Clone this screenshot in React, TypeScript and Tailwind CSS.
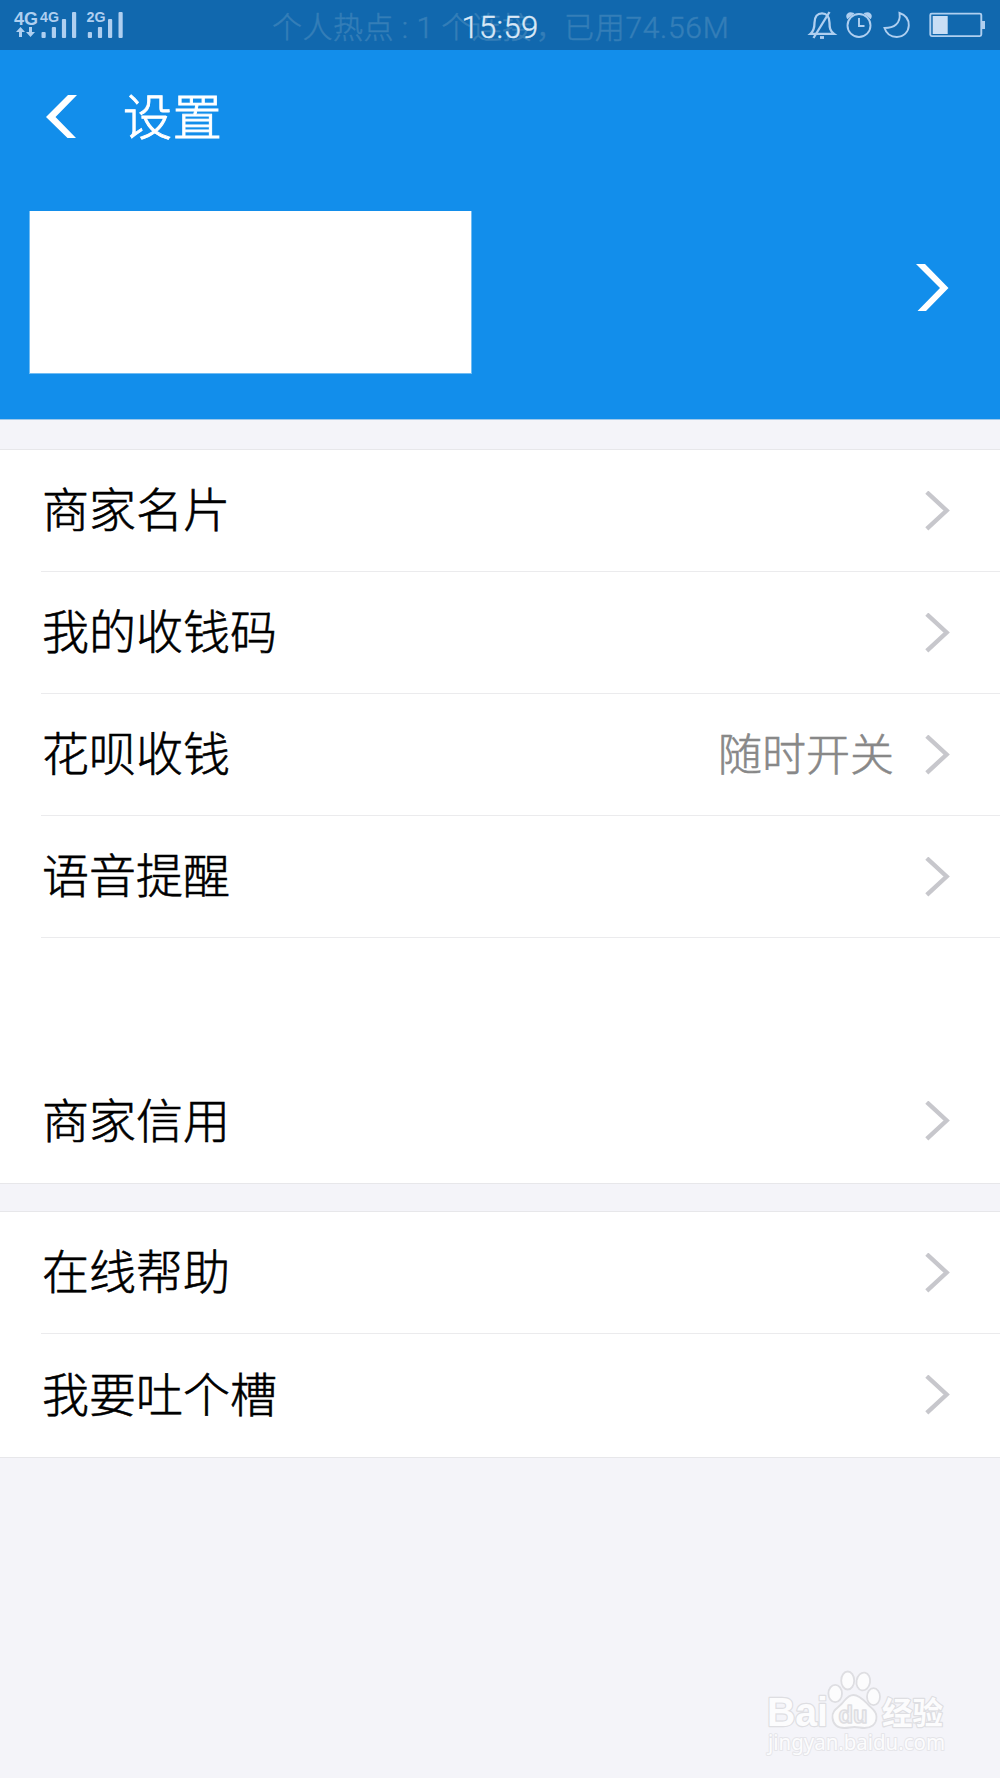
import React from 'react';

type Item = { label: string; value?: string };

function Chevron() {
  return (
    <svg className="mr-[50px] h-10 w-[25px] shrink-0" viewBox="0 0 25 40" fill="none">
      <path d="M1.800 1.200 21.600 19.500 1.800 37.800" stroke="#c7c7cc" strokeWidth="4.4" />
    </svg>
  );
}

function Row({ item, line }: { item: Item; line: boolean }) {
  return (
    <div className="ml-[41px] flex h-[122px] shrink-0">
      <div className={line ? 'flex grow items-center border-b-[1.5px] border-[#ebebed] pl-px' : 'flex grow items-center pl-px'}>
        <span className="-mt-[7px] grow text-[47px] leading-[60px] text-black [-webkit-text-stroke:0.6px_black]">{item.label}</span>
        {item.value && (
          <span className="-mt-[5px] mr-[31px] text-[44px] leading-[60px] text-[#888] [-webkit-text-stroke:0.6px_#888]">{item.value}</span>
        )}
        <Chevron />
      </div>
    </div>
  );
}

function SignalIcons() {
  return (
    <svg className="h-[50px] w-[130px]" viewBox="0 0 130 50" fill="#afcff0" fontFamily="Liberation Sans, sans-serif" fontWeight="700">
      <text x="14" y="25" fontSize="18" textLength="24" lengthAdjust="spacingAndGlyphs">4G</text>
      <path d="m20.500 27 4.500 5h-3v5h-3v-5h-3zM30.500 37l-4.500-5h3v-5h3v5h3z" />
      <text x="40" y="22" fontSize="14.500" textLength="19" lengthAdjust="spacingAndGlyphs">4G</text>
      <text x="86.500" y="22" fontSize="14.500" textLength="19" lengthAdjust="spacingAndGlyphs">2G</text>
      <g>
        <rect x="41.500" y="32" width="4.200" height="6" rx="1" />
        <rect x="51.800" y="27" width="4.200" height="11" rx="1" />
        <rect x="61.900" y="19" width="4.200" height="19" rx="1" />
        <rect x="72" y="12" width="4.200" height="26" rx="1" />
        <rect x="87.800" y="32" width="4.200" height="6" rx="1" />
        <rect x="97.900" y="27" width="4.200" height="11" rx="1" />
        <rect x="108" y="19" width="4.200" height="19" rx="1" />
        <rect x="118.500" y="12" width="4.200" height="26" rx="1" />
      </g>
    </svg>
  );
}

function SystemIcons() {
  return (
    <svg className="h-[50px] w-[200px]" viewBox="800 0 200 50" fill="none" stroke="#afcff0" strokeWidth="1.9">
      <path d="M810.500 33.800h23.500c-4-3-4.500-6-4.500-11 0-6-3-9.500-7.500-9.500s-7.500 3.500-7.500 9.500c0 5-.5 8-4 11z" strokeWidth="2.300" />
      <path d="m813.500 38 16-26" strokeWidth="2.300" />
      <path d="M820 37.500h4" strokeWidth="2.800" />
      <circle cx="859" cy="25.500" r="11.500" />
      <path d="M859 18v8h5.500" />
      <path d="M847.500 18c-1.500-3 1-6 5.500-4.500zM870.500 18c1.500-3-1-6-5.500-4.500z" fill="#afcff0" stroke="#afcff0" strokeWidth="1.500" />
      <path d="M899.500 13c6 2 9.500 6.500 9.300 12.500-.3 6.500-5 11.500-12 11.500-6 0-10.500-3.500-12.300-9 9.500 0 16.500-4.500 15-15z" />
      <rect x="930.300" y="13.600" width="51" height="22.500" rx="1.500" strokeWidth="1.900" />
      <rect x="932.700" y="16" width="15" height="18" fill="#c9def5" stroke="none" />
      <path d="M983.500 21v8" strokeWidth="3" />
    </svg>
  );
}

function Watermark() {
  return (
    <svg className="absolute right-[50px] bottom-[18px] h-[90px] w-[190px] overflow-visible" viewBox="760 1670 190 90" fill="#fcfcfd" stroke="#dedee2" strokeWidth="2.400" strokeLinejoin="round">
      <g style={{ paintOrder: 'stroke' }}>
        <text x="767" y="1726" fontFamily="Liberation Sans, sans-serif" fontWeight="700" fontSize="40" textLength="61" lengthAdjust="spacingAndGlyphs">Bai</text>
        <text x="882" y="1723.500" fontFamily="Noto Sans CJK SC, sans-serif" fontWeight="700" fontSize="31" textLength="61" lengthAdjust="spacingAndGlyphs">经验</text>
        <text x="768" y="1750" fontFamily="Noto Sans, sans-serif" fontWeight="400" fontSize="21.500" stroke="#e5e5e9" strokeWidth="2" textLength="177" lengthAdjust="spacingAndGlyphs">jingyan.baidu.com</text>
      </g>
      <g strokeWidth="1.800">
        <ellipse cx="835.200" cy="1693.500" rx="6.800" ry="8.700" />
        <ellipse cx="847.700" cy="1680.500" rx="6.500" ry="9" />
        <ellipse cx="863.300" cy="1681.500" rx="6.800" ry="9" transform="rotate(10 863.300 1681.500)" />
        <ellipse cx="873.500" cy="1696.700" rx="6.500" ry="8.500" />
        <path d="M853.500 1695c-6 0-8 5-12 9s-10 7-9 14c1 8 7 10 12 10 4 0 6-1 10-1s6 1 10 1c6 0 12-3 12-11 0-6-4-8-8-12s-9-10-15-10z" />
      </g>
      <text x="838.500" y="1722.500" fontFamily="Liberation Sans, sans-serif" fontWeight="700" fontSize="24" textLength="29" lengthAdjust="spacingAndGlyphs" fill="#f4f4f7" strokeWidth="1.600">du</text>
    </svg>
  );
}

const shop: Item[] = [
  { label: '商家名片' },
  { label: '我的收钱码' },
  { label: '花呗收钱', value: '随时开关' },
  { label: '语音提醒' },
];

export default function App() {
  return (
    <div className="relative flex h-[1778px] w-[1000px] flex-col overflow-hidden bg-[#f4f4f9] font-['Noto_Sans_CJK_SC',sans-serif] font-light">
      <div className="relative flex h-[50px] shrink-0 justify-between bg-[#1168ae]">
        <SignalIcons />
        <div className="absolute inset-y-0 left-[272px] flex items-center pt-[4px] font-[Roboto,'Noto_Sans_CJK_SC',sans-serif] text-[30px] whitespace-pre text-[#347eb8] [-webkit-text-stroke:0.5px_#347eb8]">
          <span className="w-[237px] tracking-[0.5px]">个人热点 : 1 个连接</span>
          <span className="absolute left-[264px]">，</span>
          <span className="absolute left-[292px] tracking-[0.7px]">已用74.56M</span>
        </div>
        <span className="absolute inset-x-0 top-0 text-center font-[Roboto,sans-serif] text-[31px] leading-[55px] tracking-[0.3px] text-[#d9e8f7] [-webkit-text-stroke:0.4px_#d9e8f7]">15:59</span>
        <SystemIcons />
      </div>
      <header className="flex h-[370px] shrink-0 flex-col border-b border-[#9fc9ea] bg-[#128eeb]">
        <div className="flex h-[134px] items-center pl-[46px]">
          <svg className="-mt-px mr-[46px] h-[43px] w-[31px]" viewBox="0 0 31 43" fill="#fff">
            <path d="M22 0h9L9.500 22 30 43h-8.500L0 22z" />
          </svg>
          <h1 className="-mt-[6px] text-[49px] leading-[60px] tracking-[0.8px] text-white [-webkit-text-stroke:0.9px_white]">设置</h1>
        </div>
        <div className="flex items-center justify-between pt-[27px] pr-[51px] pl-[29px]">
          <div className="h-[163px] w-[443px] border-x border-b border-[#70bcf3] bg-white" />
          <svg className="-mt-[10px] h-[47px] w-[33px]" viewBox="0 0 33 47" fill="#fff">
            <path d="M0 0h9l23.500 24L10 47H1.500L24 24z" />
          </svg>
        </div>
      </header>
      <main>
        <section className="mt-[29px] flex h-[735px] flex-col border-y-[1.5px] border-[#e7e7ea] bg-white">
          {shop.map((item) => <Row key={item.label} item={item} line />)}
          <div className="h-[122px] shrink-0" />
          <Row item={{ label: '商家信用' }} line={false} />
        </section>
        <section className="mt-[27px] flex h-[247px] flex-col border-y-[1.5px] border-[#e7e7ea] bg-white">
          <Row item={{ label: '在线帮助' }} line />
          <Row item={{ label: '我要吐个槽' }} line={false} />
        </section>
      </main>
      <Watermark />
    </div>
  );
}
